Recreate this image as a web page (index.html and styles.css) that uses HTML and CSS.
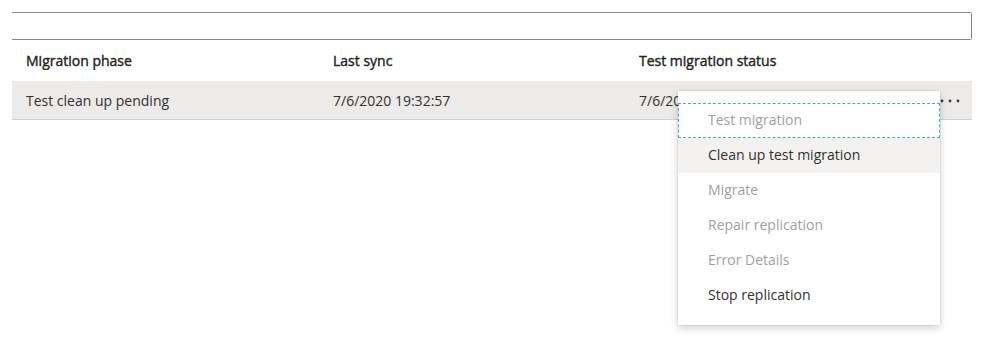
FILE: index.html
```html
<!DOCTYPE html>
<html>
<head>
<meta charset="utf-8">
<link rel="stylesheet" href="styles.css">
</head>
<body>
<div class="page">
  <div class="searchbox"></div>
  <div class="table">
    <div class="row header">
      <div class="cell c1">Migration phase</div>
      <div class="cell c2">Last sync</div>
      <div class="cell c3">Test migration status</div>
    </div>
    <div class="row data">
      <div class="cell c1">Test clean up pending</div>
      <div class="cell c2">7/6/2020 19:32:57</div>
      <div class="cell c3">7/6/2020 19:32:57</div>
      <div class="more">
        <svg width="20" height="4" viewBox="0 0 20 4"><circle cx="2" cy="2" r="1.4" fill="#3b3a39"/><circle cx="10" cy="2" r="1.4" fill="#3b3a39"/><circle cx="18" cy="2" r="1.4" fill="#3b3a39"/></svg>
      </div>
    </div>
  </div>
  <div class="menu">
    <div class="item disabled focused">Test migration</div>
    <div class="item hover">Clean up test migration</div>
    <div class="item disabled">Migrate</div>
    <div class="item disabled">Repair replication</div>
    <div class="item disabled">Error Details</div>
    <div class="item">Stop replication</div>
  </div>
</div>
</body>
</html>
```
FILE: styles.css
```css
* { box-sizing: border-box; }
html, body { margin: 0; padding: 0; background: #fff; }
body {
  font-family: "Segoe UI", "Open Sans", "Noto Sans", sans-serif;
  font-size: 14px;
  color: #323130;
  min-height: 345px;
}
.page {
  position: relative;
  min-height: 345px;
  padding: 12px 14px 0 12px;
}
.searchbox {
  height: 28px;
  border: 1px solid #8a8886;
  border-left: none;
  border-radius: 0 2px 2px 0;
}
.row {
  display: flex;
  align-items: center;
  position: relative;
}
.header {
  height: 41px;
  font-weight: 400;
  color: #252423;
  -webkit-text-stroke: 0.4px #252423;
}
.data {
  height: 39px;
  background: #edebe9;
  border-bottom: 1px solid #d2d0ce;
}
.cell {
  padding-left: 14px;
  white-space: nowrap;
  overflow: hidden;
}
.c1 { width: 307px; }
.c2 { width: 306px; }
.c3 { flex: 1; }
.more {
  position: absolute;
  right: 12px;
  top: 17px;
  line-height: 0;
}
.menu {
  position: absolute;
  left: 678px;
  top: 91px;
  width: 262px;
  background: #fff;
  box-shadow: 0 3px 8px rgba(0,0,0,0.18), 0 0 2px rgba(0,0,0,0.12);
  padding: 12px 0 12px 0;
  z-index: 2;
}
.item {
  height: 35px;
  line-height: 34px;
  padding-left: 30px;
  color: #323130;
}
.item.disabled { color: #a19f9d; }
.item.hover { background: #f3f2f1; }
.item.focused {
  outline: 1px dashed #35b0d4;
  outline-offset: -1px;
}
```
